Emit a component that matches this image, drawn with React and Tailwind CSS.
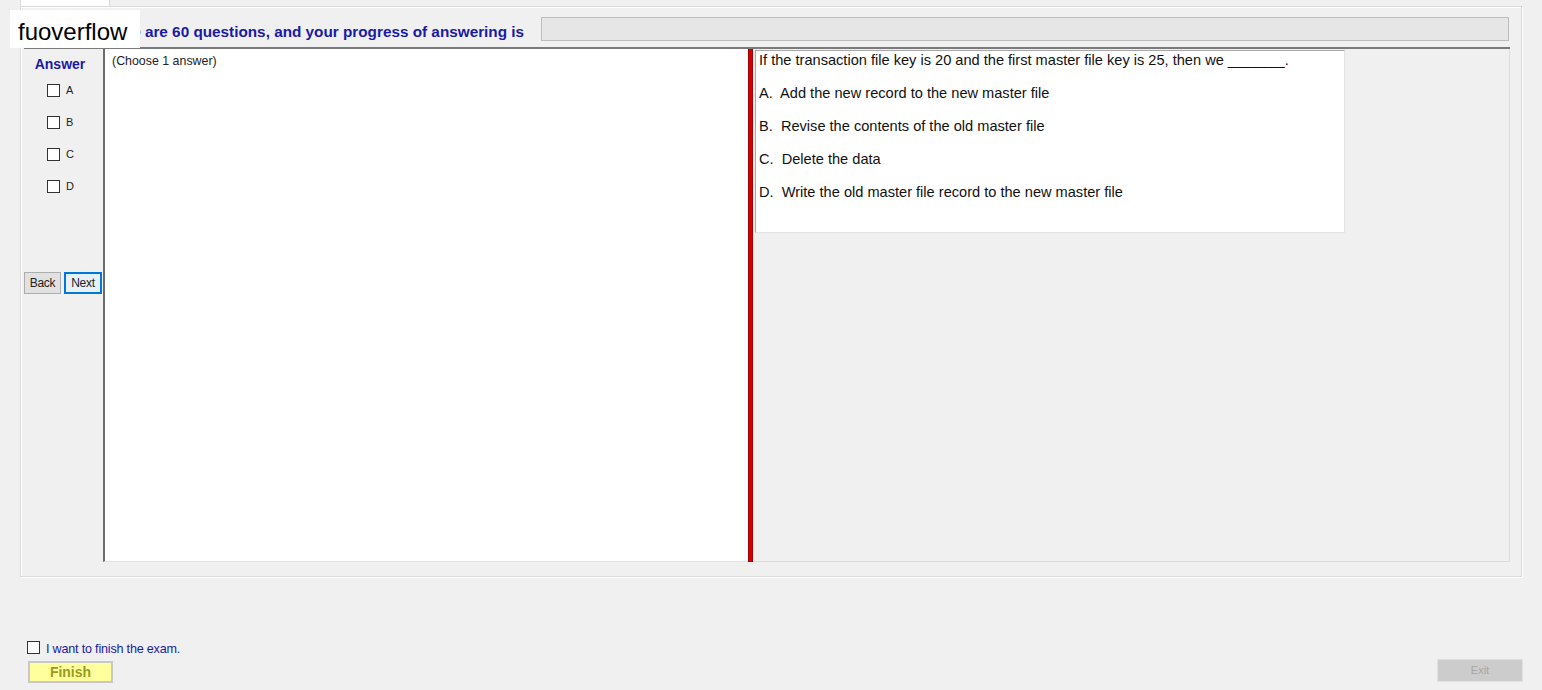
import React from 'react'

const options = ['A', 'B', 'C', 'D']

const answers = [
    'A.  Add the new record to the new master file',
    'B.  Revise the contents of the old master file',
    'C.  Delete the data',
    'D.  Write the old master file record to the new master file',
]

function Box({ className = '' }) {
    return <span className={`inline-block w-[13px] h-[13px] border border-[#333] bg-white ${className}`}></span>
}

export default function App() {
    return (
        <div className="relative w-[1542px] h-[690px] overflow-hidden bg-[#f0f0f0] font-['Liberation_Sans',Arial,sans-serif]">
            {/* tab strip */}
            <div className="ml-[20px] w-[90px] h-[6px] border-x border-[#d9d9d9] bg-white"></div>

            {/* main group panel */}
            <div className="ml-[20px] w-[1502px] h-[571px] border border-[#dadada] shadow-[inset_1px_1px_0_#fff,1px_1px_0_#fff] flex flex-col">
                <div className="h-[40px] flex items-start pt-[10px] pl-[78px] pr-[12px]">
                    <span className="mt-[6px] leading-[17px] text-[15.3px] font-bold text-[#1a1aa6] whitespace-nowrap">There are 60 questions, and your progress of answering is</span>
                    <div className="ml-[17px] flex-1 h-[24px] bg-[#e6e6e6] border border-[#bcbcbc]"></div>
                </div>

                <div className="ml-[3px] w-[1486px] h-[515px] border-t-2 border-[#7a7a7a] flex">
                    {/* answer column */}
                    <div className="w-[79px] flex flex-col">
                        <div className="pt-[5px] text-center text-[14px] font-bold text-[#1a1aa6] pr-[7px]">Answer</div>
                        <div className="flex flex-col gap-[19px] pl-[23px] mt-[9px]">
                            {options.map((o) => (
                                <label key={o} className="flex items-center gap-[6px] text-[11px] text-[#222] leading-[13px]">
                                    <Box />
                                    <span>{o}</span>
                                </label>
                            ))}
                        </div>
                        <div className="flex gap-[3px] mt-[79px]">
                            <button className="w-[37px] h-[22px] border border-[#adadad] bg-[#e1e1e1] text-[12px] tracking-[-0.3px] text-[#222]">Back</button>
                            <button className="w-[38px] h-[22px] border-2 border-[#0078d7] bg-[#e5f1fb] text-[12px] tracking-[-0.3px] text-[#222]">Next</button>
                        </div>
                    </div>

                    {/* answer text area */}
                    <div className="w-[645px] bg-white border-l-2 border-[#6b6b6b] border-b border-b-[#e3e3e3] pl-[7px] pt-[3px] text-[12.4px] text-[#222]">
                        (Choose 1 answer)
                    </div>

                    {/* splitter */}
                    <div className="w-[5px] bg-[#d40000] border-x border-[#a00000]"></div>

                    {/* question area */}
                    <div className="flex-1 border-r border-b border-[#dcdcdc] pt-[1px] pl-[2px]">
                        <div className="w-[590px] h-[183px] bg-white border border-[#a8a8a8] border-r-[#e4e4e4] border-b-[#e4e4e4] pl-[3px] pt-[1px] text-[14.6px] text-[#111]">
                            <p className="leading-[17px]">If the transaction file key is 20 and the first master file key is 25, then we _______.</p>
                            {answers.map((a) => (
                                <p key={a} className="leading-[17px] mt-[16px] whitespace-pre">{a}</p>
                            ))}
                        </div>
                    </div>
                </div>
            </div>

            {/* bottom area */}
            <div className="flex items-end justify-between pl-[27px] pr-[19px] mt-[59px]">
                <div className="flex flex-col">
                    <label className="flex items-center gap-[6px] text-[12.6px] text-[#1a1aa6]">
                        <Box />
                        <span className="mt-[4px] tracking-[-0.2px]">I want to finish the exam.</span>
                    </label>
                    <button className="ml-[1px] mt-[2px] w-[85px] h-[22px] bg-[#ffff9e] border-2 border-[#c8c8c8] text-[14px] font-bold text-[#9a9a1a] leading-none">Finish</button>
                </div>
                <button className="w-[86px] h-[23px] mb-[1px] bg-[#cccccc] border border-[#e0e0e0] text-[11px] text-[#a6a6a6]">Exit</button>
            </div>

            {/* watermark */}
            <div className="absolute left-[10px] top-[10px] w-[130px] h-[38px] bg-white flex items-center pl-[8px] pt-[6px] text-[24px] text-black">
                fuoverflow
            </div>
        </div>
    )
}
